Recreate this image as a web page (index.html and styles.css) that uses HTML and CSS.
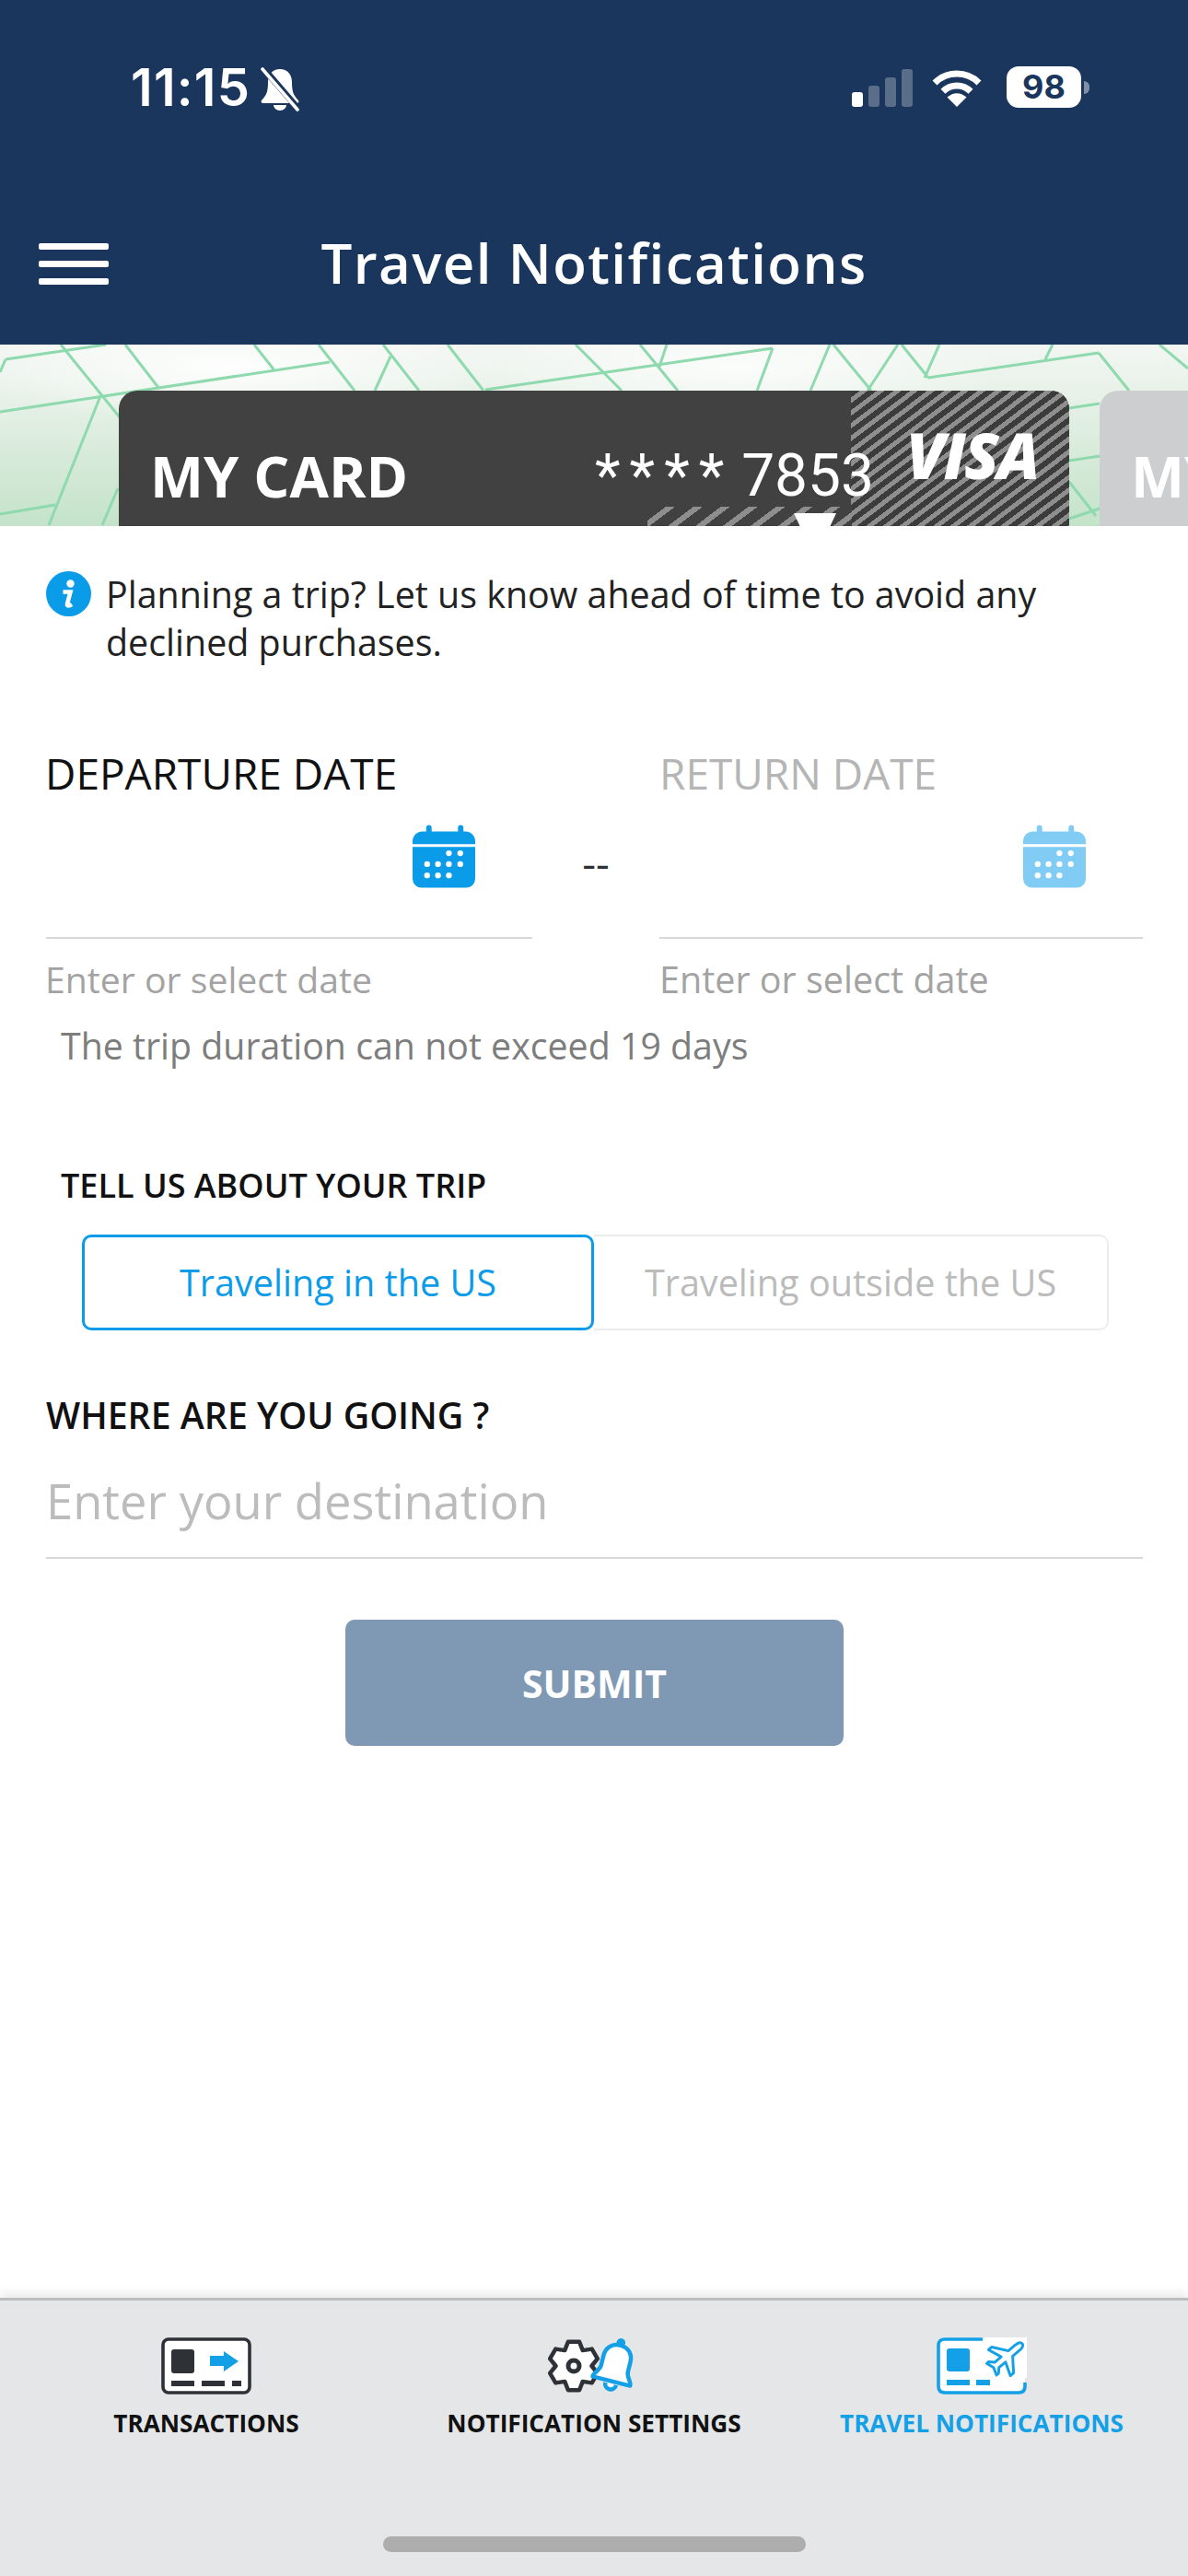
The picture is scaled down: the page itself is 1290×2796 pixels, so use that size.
FILE: index.html
```html
<!DOCTYPE html>
<html lang="en">

<head>
    <meta charset="UTF-8">
    <meta name="viewport" content="width=device-width, initial-scale=1.0">
    <title>Travel Notifications</title>
    <link rel="stylesheet" href="styles.css">
</head>

<body>
    <svg class="defs" width="0" height="0">
        <symbol id="calendar" viewBox="0 0 70 70">
            <rect x="15" y="0" width="6" height="12" rx="3" fill="currentColor" />
            <rect x="50" y="0" width="6" height="12" rx="3" fill="currentColor" />
            <path d="M0 18a11 11 0 0 1 11-11h47a11 11 0 0 1 11 11v3H0z" fill="currentColor" />
            <path d="M0 24h69v35a10 10 0 0 1-10 10H10A10 10 0 0 1 0 59z" fill="currentColor" />
            <g fill="#fff">
                <circle cx="40" cy="31" r="3.2" />
                <circle cx="52.5" cy="31" r="3.2" />
                <circle cx="16" cy="43" r="3.2" />
                <circle cx="28" cy="43" r="3.2" />
                <circle cx="40" cy="43" r="3.2" />
                <circle cx="52.5" cy="43" r="3.2" />
                <circle cx="16" cy="55.5" r="3.2" />
                <circle cx="28" cy="55.5" r="3.2" />
                <circle cx="40" cy="55.5" r="3.2" />
            </g>
        </symbol>
    </svg>

    <header class="topBar">
        <div class="statusBar">
            <div class="statusLeft">
                <span class="clock">11:15</span>
                <svg class="muteIcon" width="44" height="48" viewBox="0 0 44 48">
                    <path d="M22 2c-8 0-13 6-13 14 0 9-1 14-7 20-1 2 0 3 2 3h36c2 0 3-1 2-3-6-6-7-11-7-20 0-8-5-14-13-14z" fill="#fff" />
                    <path d="M15 41a7 6 0 0 0 14 0z" fill="#fff" />
                    <path d="M3 0l38 44" stroke="#1b365d" stroke-width="7" />
                    <path d="M3 2l38 44" stroke="#fff" stroke-width="3.6" stroke-linecap="round" />
                </svg>
            </div>
            <div class="statusRight">
                <div class="signal">
                    <span class="bar bar1"></span>
                    <span class="bar bar2"></span>
                    <span class="bar bar3"></span>
                    <span class="bar bar4"></span>
                </div>
                <svg class="wifiIcon" width="56" height="42" viewBox="0 0 56 42" fill="none" stroke="#fff" stroke-width="7">
                    <path d="M4 16A34 34 0 0 1 52 16" />
                    <path d="M13 25.2A21 21 0 0 1 43 25.2" />
                    <path d="M28 42L17.500 31.500Q28 23 38.500 31.500z" fill="#fff" stroke="none" />
                </svg>
                <div class="battery">
                    <span class="batteryBody">98</span>
                    <span class="batteryTip"></span>
                </div>
            </div>
        </div>
        <div class="navBar">
            <div class="burger">
                <span></span>
                <span></span>
                <span></span>
            </div>
            <h1 class="pageTitle">Travel Notifications</h1>
        </div>
    </header>

    <section class="cardStrip">
        <svg class="mapLines" width="1290" height="197" viewBox="0 0 1290 197" fill="none" stroke="#8fd9ae" stroke-width="3">
            <path d="M0 73L358 19M6 16L115 0M6 16L0 30M66 0L130 79M136 0L173 48M109 56L53 196M276 0L298 28M346 0L385 50" />
            <path d="M416 0L455 50M424 13L407 50M486 0L525 50M527 49L839 4M625 0L675 50M695 0L736 50M724 0L716 24M0 184L60 174M128 156L111 196" />
            <path d="M839 4L822 50M901 0L880 50M905 0L946 50M975 0L942 50M979 0L1008 36M1020 0L1004 36M1008 36L1193 9M1143 0L1135 16M1193 9L1226 50M1259 0L1290 26" />
            <path d="M1161 69L1194 64M1161 126L1194 121M1161 189L1194 178M1161 149L1190 186" />
        </svg>
        <div class="card">
            <div class="cardStripes"></div>
            <div class="cardStripes2"></div>
            <span class="cardMark"></span>
            <div class="cardName">MY CARD</div>
            <div class="cardNumber"><span class="stars">****</span> 7853</div>
            <div class="cardBrand">VISA</div>
        </div>
        <div class="card cardNext">
            <div class="cardName">MY CARD</div>
        </div>
    </section>

    <main class="content">
        <div class="infoRow">
            <svg class="infoIcon" width="49" height="49" viewBox="0 0 49 49">
                <circle cx="24.500" cy="24.500" r="24.500" fill="#0a9be9" />
                <circle cx="26.500" cy="13.500" r="4.200" fill="#fff" />
                <path d="M18.500 22.500h8l-3.500 13c-.5 2.500 2 2.500 5 .5" fill="none" stroke="#fff" stroke-width="4.600" />
            </svg>
            <p class="infoText">Planning a trip? Let us know ahead of time to avoid any declined purchases.</p>
        </div>

        <div class="dateRow">
            <div class="dateField">
                <div class="dateLabel">DEPARTURE DATE</div>
                <div class="dateInput">
                    <svg class="calIcon"><use href="#calendar" /></svg>
                </div>
                <div class="dateHint">Enter or select date</div>
            </div>
            <div class="dateDash">--</div>
            <div class="dateField dateFieldOff">
                <div class="dateLabel">RETURN DATE</div>
                <div class="dateInput">
                    <svg class="calIcon"><use href="#calendar" /></svg>
                </div>
                <div class="dateHint">Enter or select date</div>
            </div>
        </div>
        <p class="durationNote">The trip duration can not exceed 19 days</p>

        <h2 class="tripTitle">TELL US ABOUT YOUR TRIP</h2>
        <div class="tripToggle">
            <div class="toggleBtn toggleOn">Traveling in the US</div>
            <div class="toggleBtn">Traveling outside the US</div>
        </div>

        <h2 class="goingTitle">WHERE ARE YOU GOING ?</h2>
        <div class="destination">Enter your destination</div>

        <button type="button" class="submitBtn">SUBMIT</button>
    </main>

    <nav class="tabBar">
        <div class="tabs">
            <div class="tab">
                <svg width="98" height="62" viewBox="0 0 98 62">
                    <rect x="2" y="2" width="94" height="58" rx="6" fill="#fff" stroke="#2e3135" stroke-width="3.600" />
                    <rect x="11" y="13" width="25" height="26" rx="3" fill="#2e3135" />
                    <path d="M11 47h25v6H11zM44 47h25v6H44zM77 47h10v6H77z" fill="#2e3135" />
                    <path d="M53 20h15v-5l16 11-16 11v-6H53z" fill="#14a0e6" />
                </svg>
                <span class="tabLabel">TRANSACTIONS</span>
            </div>
            <div class="tab">
                <svg width="100" height="62" viewBox="0 0 100 62">
                    <polygon points="21.900,4.700 34.100,4.700 37.750,14.100 47.700,12.600 53.800,23.100 47.500,31 53.800,38.900 47.700,49.400 37.750,47.900 34.100,57.300 21.900,57.300 18.250,47.900 8.300,49.400 2.200,38.900 8.500,31 2.200,23.100 8.300,12.600 18.250,14.100" fill="#fff" stroke="#2e3135" stroke-width="4.500" stroke-linejoin="round" />
                    <circle cx="28" cy="31" r="6" fill="#fff" stroke="#2e3135" stroke-width="5" />
                    <g transform="translate(73 31) rotate(14)" fill="#fff" stroke="#14a0e6" stroke-width="4.500" stroke-linejoin="round">
                        <path d="M-6 20a6 6 0 0 0 12 0" />
                        <path d="M0-23C-10-23-15-16-15-8V3C-15 9-21 12-21 17L21 17C21 12 15 9 15 3V-8C15-16 10-23 0-23Z" />
                        <circle cx="0" cy="-26" r="2.500" fill="#14a0e6" />
                    </g>
                </svg>
                <span class="tabLabel">NOTIFICATION SETTINGS</span>
            </div>
            <div class="tab tabActive">
                <svg width="98" height="62" viewBox="0 0 98 62">
                    <path d="M8 0H98V44H96V54Q96 60 90 60H8Q2 60 2 54V8Q2 0 8 0Z" fill="#fff" />
                    <path d="M50 2H9Q2 2 2 9V53Q2 60 9 60H89Q96 60 96 53V49" fill="none" stroke="#14a0e6" stroke-width="3.600" />
                    <rect x="11" y="12" width="25" height="25" rx="3" fill="#14a0e6" />
                    <path d="M11 46h25v6H11zM43 46h15v6H43z" fill="#14a0e6" />
                    <path transform="translate(76 21) rotate(50) scale(.92)" d="M0-24C3-24 4-20 4-16V-6L20 6V11L4 5V15L9 20V23L0 20L-9 23V20L-4 15V5L-20 11V6L-4-6V-16C-4-20-3-24 0-24Z" fill="#fff" stroke="#14a0e6" stroke-width="3.200" stroke-linejoin="round" />
                </svg>
                <span class="tabLabel">TRAVEL NOTIFICATIONS</span>
            </div>
        </div>
        <div class="homeBar"></div>
    </nav>
</body>

</html>
```
FILE: styles.css
```css
* {
    box-sizing: border-box;
}

body {
    font-family: "Open Sans", Arial, sans-serif;
    margin: 0;
    padding: 0;
    background-color: white;
    display: flex;
    flex-direction: column;
    height: 2796px;
    overflow: hidden;
}

.defs {
    display: block;
    height: 0;
}

.topBar {
    height: 374px;
    flex: none;
    background-color: #1b365d;
    color: white;
}

.statusBar {
    height: 118px;
    padding: 72px 107px 0 142px;
    display: flex;
    justify-content: space-between;
}

.statusLeft {
    display: flex;
    align-items: flex-start;
    gap: 10px;
}

.clock {
    font-family: Inter, sans-serif;
    font-weight: 600;
    font-size: 56px;
    line-height: 46px;
    letter-spacing: 1.2px;
}

.muteIcon {
    margin-top: 1px;
}

.statusRight {
    display: flex;
    align-items: flex-start;
}

.signal {
    display: flex;
    align-items: flex-end;
    gap: 6px;
    height: 44px;
    margin-right: 20px;
}

.bar {
    width: 12px;
    border-radius: 3px;
    background-color: rgba(255, 255, 255, 0.28);
}

.bar1 {
    height: 16px;
    background-color: white;
}

.bar2 {
    height: 23px;
}

.bar3 {
    height: 32px;
}

.bar4 {
    height: 41px;
}

.wifiIcon {
    margin-top: 2px;
    margin-right: 26px;
}

.battery {
    display: flex;
    align-items: center;
    gap: 3px;
}

.batteryBody {
    width: 81px;
    height: 45px;
    border-radius: 13px;
    background-color: white;
    color: #1b365d;
    font-family: Inter, sans-serif;
    font-weight: 700;
    font-size: 36px;
    line-height: 45px;
    text-align: center;
}

.batteryTip {
    width: 6px;
    height: 14px;
    border-radius: 0 7px 7px 0;
    background-color: rgba(255, 255, 255, 0.45);
}

.navBar {
    margin-top: 125px;
    padding: 0 42px;
    display: grid;
    grid-template-columns: 1fr auto 1fr;
    align-items: center;
    height: 84px;
}

.burger {
    width: 76px;
    margin-top: 2px;
    display: flex;
    flex-direction: column;
    gap: 12px;
}

.burger span {
    height: 7px;
    border-radius: 2px;
    background-color: white;
}

.pageTitle {
    margin: 0;
    font-size: 60px;
    font-weight: 600;
    line-height: 84px;
    letter-spacing: 1.4px;
    white-space: nowrap;
}

.cardStrip {
    position: relative;
    height: 197px;
    flex: none;
    overflow: hidden;
    padding: 50px 0 0 129px;
    display: flex;
    gap: 33px;
    background:
        radial-gradient(ellipse 300px 60px at 250px 25px, rgba(255, 255, 255, 0.9), transparent),
        radial-gradient(ellipse 300px 60px at 800px 25px, rgba(255, 255, 255, 0.8), transparent),
        linear-gradient(#f2f6f2, #e2efe3 40%, #c4e3c9);
}

.mapLines {
    position: absolute;
    left: 0;
    top: 0;
}

.card {
    position: relative;
    flex: none;
    width: 1032px;
    height: 300px;
    padding: 0 34px;
    border-radius: 20px;
    background-color: #414141;
    color: white;
    overflow: hidden;
}

.cardNext {
    background-color: #cdced0;
}

.cardStripes {
    position: absolute;
    left: 795px;
    top: 0;
    width: 237px;
    height: 300px;
    background: repeating-linear-gradient(143deg, #3c3c3c 0 6px, #8e8e8f 6px 11px);
}

.cardStripes2 {
    position: absolute;
    left: 574px;
    top: 126px;
    width: 222px;
    height: 30px;
    background: repeating-linear-gradient(143deg, #414141 0 12px, #8e8e8f 12px 18px);
}

.cardMark {
    position: absolute;
    left: 733px;
    top: 133px;
    width: 46px;
    height: 0;
    border-top: 30px solid white;
    border-left: 14px solid transparent;
    border-right: 14px solid transparent;
}

.cardName {
    position: relative;
    font-size: 61.500px;
    font-weight: 700;
    line-height: 82px;
    margin-top: 51px;
}

.cardNumber {
    position: absolute;
    left: 517px;
    top: 52px;
    font-family: Roboto, sans-serif;
    font-size: 64px;
    line-height: 82px;
    word-spacing: -7px;
    white-space: nowrap;
}

.stars {
    letter-spacing: 10px;
}

.cardBrand {
    position: absolute;
    left: 855px;
    top: 28px;
    font-size: 69px;
    font-style: italic;
    font-weight: 800;
    line-height: 82px;
    letter-spacing: -2px;
}

.content {
    flex: 1;
    padding: 0 49px 0 50px;
}

.infoRow {
    display: flex;
    gap: 16px;
    padding: 49px 0 0 0;
}

.infoIcon {
    flex: none;
}

.infoText {
    margin: -1px 0 0 0;
    width: 1060px;
    font-size: 39.4px;
    line-height: 52px;
    color: #222;
}

.dateRow {
    display: flex;
    margin-top: 88px;
}

.dateField {
    width: 528px;
    flex: none;
}

.dateFieldOff {
    width: 525px;
}

.dateLabel {
    margin-left: -1px;
    font-size: 46px;
    line-height: 56px;
    color: #111;
}

.dateFieldOff .dateLabel {
    margin-left: 0;
    color: #b5b5b5;
}

.dateInput {
    height: 152px;
    padding: 28px 61px 0 0;
    display: flex;
    justify-content: flex-end;
    border-bottom: 2px solid #d8d8d8;
    color: #0a9be9;
}

.dateFieldOff .dateInput {
    color: #80ccf4;
}

.calIcon {
    width: 69px;
    height: 70px;
}

.dateHint {
    margin-top: 22px;
    margin-left: -1px;
    font-size: 39.2px;
    line-height: 44px;
    color: #a3a3a3;
}

.dateFieldOff .dateHint {
    margin-left: 0;
    font-size: 39.5px;
}

.dateDash {
    width: 138px;
    flex: none;
    margin-top: 97px;
    text-align: center;
    font-size: 46px;
    font-weight: 500;
    line-height: 56px;
    color: #2e3135;
}

.durationNote {
    margin: 26px 0 0 16px;
    font-size: 39.3px;
    line-height: 48px;
    color: #7d7d7d;
}

.tripTitle {
    margin: 104px 0 0 16px;
    font-size: 36px;
    font-weight: 600;
    line-height: 48px;
    color: #111;
}

.tripToggle {
    display: flex;
    margin: 29px 37px 0 39px;
}

.toggleBtn {
    flex: 1;
    height: 104px;
    display: flex;
    align-items: center;
    justify-content: center;
    border: 2px solid #ececec;
    border-left: none;
    border-radius: 0 10px 10px 0;
    font-size: 39.6px;
    color: #bbb;
}

.toggleOn {
    flex: none;
    width: 556px;
    border: 3px solid #0a9be9;
    border-radius: 10px;
    color: #0a9be9;
}

.goingTitle {
    margin: 68px 0 0 0;
    font-size: 39.3px;
    font-weight: 600;
    line-height: 48px;
    color: #111;
}

.destination {
    margin-top: 33px;
    padding-bottom: 25px;
    border-bottom: 2px solid #d8d8d8;
    font-size: 52.5px;
    line-height: 72px;
    color: #bcbcbc;
}

.submitBtn {
    display: block;
    width: 541px;
    height: 137px;
    margin: 66px auto 0 auto;
    border: none;
    border-radius: 10px;
    background-color: #7f99b4;
    color: white;
    font-family: inherit;
    font-size: 41px;
    font-weight: 700;
}

.tabBar {
    flex: none;
    height: 302px;
    border-top: 3px solid #bdbdbd;
    background-color: #e5e6e8;
    box-shadow: 0 -6px 10px rgba(0, 0, 0, 0.08);
    padding: 40px 0 0 0;
}

.tabs {
    display: grid;
    grid-template-columns: repeat(3, 421px);
    justify-content: center;
}

.tab {
    display: flex;
    flex-direction: column;
    align-items: center;
    gap: 13px;
}

.tab svg {
    display: block;
}

.tabLabel {
    font-size: 26.2px;
    font-weight: 700;
    line-height: 36px;
    color: #111;
    white-space: nowrap;
}

.tabActive .tabLabel {
    color: #14a0e6;
}

.homeBar {
    width: 459px;
    height: 17px;
    margin: 105px auto 0 auto;
    border-radius: 9px;
    background-color: #adadad;
}
```
